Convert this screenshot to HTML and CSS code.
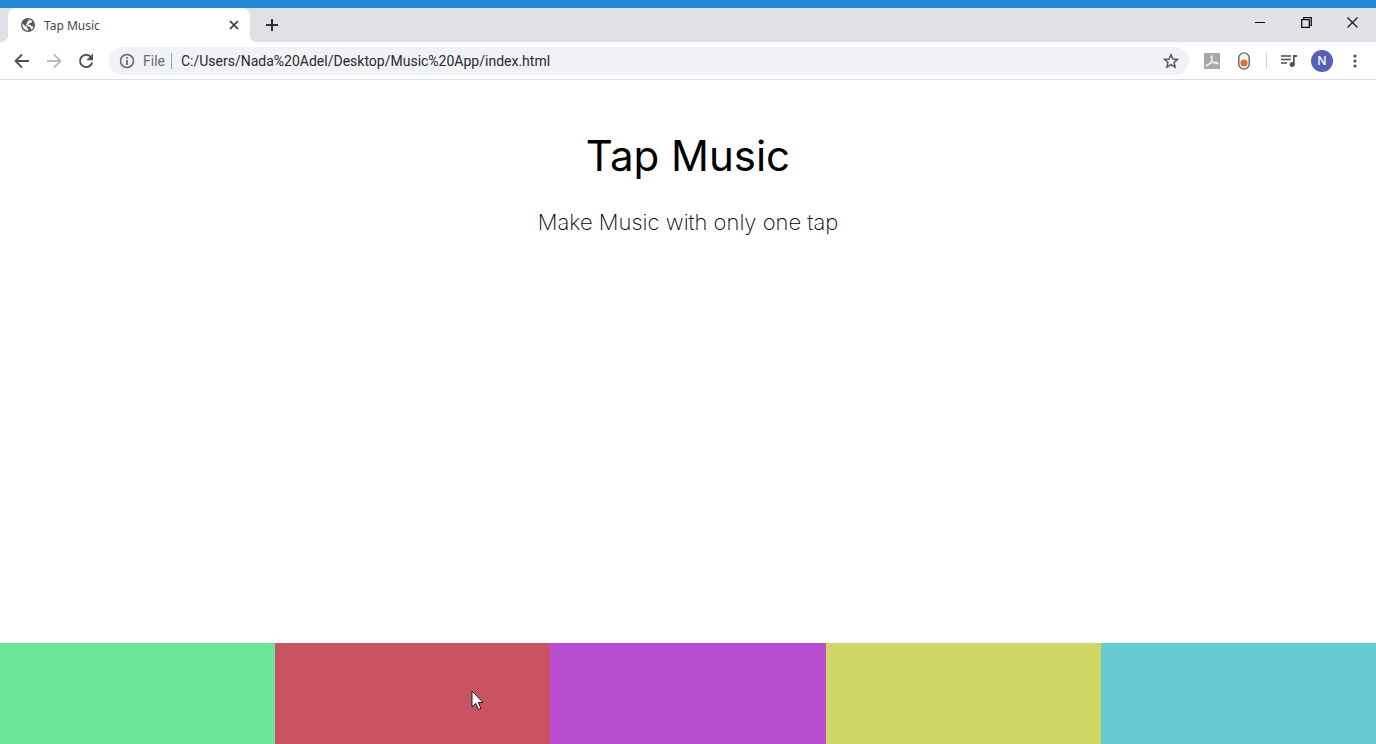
FILE: index.html
```html
<!DOCTYPE html>
<html lang="en">
<head>
<meta charset="utf-8">
<title>Tap Music</title>
<link rel="stylesheet" href="styles.css">
</head>
<body>
<div class="accent-strip"></div>
<div class="tab-bar">
  <div class="tab">
    <svg class="favicon" viewBox="0 0 24 24"><circle cx="12" cy="12" r="12" fill="#55585d"/><path d="M2.500 9.500l5 4.500h2.500v2.500l2.500 2V22C6 21.500 1.500 16 2.500 9.500zM13 2.500c3 .2 5 1.500 6.500 3.500L17 8.500h-3v2l-2.500 1.500h5l2 2.500h3c-.5 2-1.500 4-3 5.500l-1.500-1-1-3.500-5-1.500L8.500 11 11 8V5.500h2z" fill="#fff"/></svg>
    <span class="tab-title">Tap Music</span>
    <button class="icon-button tab-close" aria-label="Close tab"><svg width="10" height="10" viewBox="0 0 10 10"><path d="M1 1l8 8M9 1L1 9" stroke="#303236" stroke-width="1.700"/></svg></button>
  </div>
  <button class="icon-button new-tab" aria-label="New tab"><svg width="12" height="12" viewBox="0 0 12 12"><path d="M6 0v12M0 6h12" stroke="#303236" stroke-width="2"/></svg></button>
  <div class="window-controls">
    <button class="icon-button window-button" aria-label="Minimize"><svg width="10" height="10" viewBox="0 0 10 10"><path d="M0 5.500h10" stroke="#111"/></svg></button>
    <button class="icon-button window-button" aria-label="Restore"><svg width="11" height="11" viewBox="0 0 11 11" fill="none" stroke="#111" stroke-width="1.300"><path d="M.7 2.700h7.600v7.600H.7zM2.700 2.700v-2h7.600v7.600h-2"/></svg></button>
    <button class="icon-button window-button" aria-label="Close"><svg width="11" height="11" viewBox="0 0 11 11"><path d="M.5.500l10 10M10.500.500l-10 10" stroke="#111" stroke-width="1.100"/></svg></button>
  </div>
</div>
<div class="toolbar">
  <div class="navigation">
    <button class="icon-button" aria-label="Back"><svg width="16" height="16" viewBox="0 0 16 16" fill="none" stroke="#4d5055" stroke-width="1.800"><path d="M15 8H2M8 1.500L1.500 8 8 14.500"/></svg></button>
    <button class="icon-button" aria-label="Forward"><svg width="16" height="16" viewBox="0 0 16 16" fill="none" stroke="#b8babd" stroke-width="1.800"><path d="M1 8h13M8 1.500L14.500 8 8 14.500"/></svg></button>
    <button class="icon-button" aria-label="Reload"><svg width="16" height="16" viewBox="0 0 16 16"><path d="M13 4a6.200 6.200 0 1 0 1.200 5.500" fill="none" stroke="#4d5055" stroke-width="1.900"/><path d="M15 .5v6.700H8.300z" fill="#4d5055"/></svg></button>
  </div>
  <div class="address">
    <svg width="16" height="16" viewBox="0 0 16 16"><circle cx="8" cy="8" r="6.500" fill="none" stroke="#5f6368" stroke-width="1.500"/><path d="M8 7v5M8 4v1.700" stroke="#5f6368" stroke-width="1.700"/></svg>
    <label class="scheme" for="url">File</label>
    <span class="address-divider"></span>
    <input class="url" id="url" type="text" spellcheck="false" value="C:/Users/Nada%20Adel/Desktop/Music%20App/index.html">
    <button class="icon-button" aria-label="Bookmark this page"><svg width="16" height="16" viewBox="0 0 16 16"><path d="M8 1.700l1.900 4.300 4.700.4L11 9.500l1.100 4.600L8 11.600l-4.100 2.500L5 9.500 1.400 6.400l4.700-.4z" fill="none" stroke="#4d5055" stroke-width="1.400"/></svg></button>
  </div>
  <div class="extensions">
    <button class="icon-button" aria-label="PDF tools"><svg width="16" height="16" viewBox="0 0 16 16"><path d="M0 0h16v16H0z" fill="#a8a8a8"/><path d="M2.500 13c3-1 6-5 5.600-9.500-.2-1.500-1.500-1-1 .8.700 3 3.400 6 6.200 6.500 1 0 .7-1.500-1-1.500-3.500 0-7 1-9.200 2.500-.8.600-1 1.200-.6 1.200z" fill="none" stroke="#f3f3f3" stroke-width="1.200"/></svg></button>
    <button class="icon-button" aria-label="Recorder"><svg width="16" height="18" viewBox="0 0 16 18"><rect x="2.700" y=".9" width="10.600" height="16.200" rx="5.300" fill="#f6f3f0" stroke="#65676a" stroke-width="1.400"/><circle cx="8" cy="11" r="3.500" fill="#e16d39"/></svg></button>
  </div>
  <span class="toolbar-divider"></span>
  <div class="profile-tools">
    <button class="icon-button" aria-label="Media controls"><svg width="16" height="14" viewBox="0 0 16 14"><path d="M0 2h10M0 5.500h10M0 9h6" stroke="#4d5055" stroke-width="1.700"/><path d="M12 1h4v2h-2.300v7.500H12z" fill="#4d5055"/><circle cx="11.200" cy="10.500" r="2.500" fill="#4d5055"/></svg></button>
    <button class="icon-button avatar" aria-label="Profile N">N</button>
    <button class="icon-button" aria-label="Menu"><svg width="16" height="16" viewBox="0 0 16 16" fill="#4d5055"><circle cx="8" cy="3" r="1.600"/><circle cx="8" cy="8" r="1.600"/><circle cx="8" cy="13" r="1.600"/></svg></button>
  </div>
</div>
<main class="app">
  <header class="intro">
    <h1 class="title">Tap Music</h1>
    <p class="tagline">Make Music with only one tap</p>
  </header>
  <div class="pads">
    <button class="pad pad-green" aria-label="Pad 1"></button>
    <button class="pad pad-red" aria-label="Pad 2"></button>
    <button class="pad pad-purple" aria-label="Pad 3"></button>
    <button class="pad pad-yellow" aria-label="Pad 4"></button>
    <button class="pad pad-blue" aria-label="Pad 5"></button>
  </div>
</main>
<svg class="cursor" width="13" height="21" viewBox="0 0 13 21"><path d="M1 1v16l3.700-3.500L7.500 19.500l2.500-1.100-2.700-5.900H12z" fill="#fff" stroke="#1c1c1c"/></svg>
</body>
</html>
```
FILE: styles.css
```css
* { box-sizing: border-box; }
body {
  margin: 0;
  min-height: 100vh;
  display: flex;
  flex-direction: column;
  background: #fff;
  font-family: "Noto Sans", sans-serif;
}
svg { display: block; flex: none; }
.icon-button {
  display: flex;
  align-items: center;
  justify-content: center;
  flex: none;
  border: 0;
  padding: 0;
  background: none;
}
.accent-strip { height: 8px; background: #2487d5; }
.tab-bar {
  display: flex;
  height: 34px;
  padding: 0 1px 0 8px;
  background:
    radial-gradient(circle at 0 0, #dfe1e6 8px, #fff 9px) 0 100% / 8px 8px no-repeat,
    radial-gradient(circle at 100% 0, #dfe1e6 8px, #fff 9px) 250px 100% / 8px 8px no-repeat,
    #dfe1e6;
}
.tab {
  display: flex;
  align-items: center;
  width: 242px;
  padding: 0 11px 0 13px;
  gap: 9px;
  background: #fff;
  border-radius: 8px 8px 0 0;
}
.favicon { width: 14px; height: 14px; }
.tab-title { flex: 1; font-size: 12px; color: #45484d; }
.tab-close { width: 10px; height: 16px; }
.new-tab { width: 28px; margin-left: 8px; }
.window-controls { display: flex; margin-left: auto; }
.window-button { width: 46px; height: 28px; }
.toolbar {
  display: flex;
  align-items: center;
  height: 38px;
  padding: 0 13px 0 14px;
  border-bottom: 1px solid #dadce0;
}
.navigation { display: flex; gap: 16px; }
.address {
  display: flex;
  align-items: center;
  flex: 1;
  min-width: 0;
  height: 28px;
  margin-left: 15px;
  padding: 0 10px;
  border-radius: 14px;
  background: #f1f2f5;
  font-family: "Roboto", sans-serif;
  font-size: 14px;
}
.scheme { margin-left: 8px; color: #6a6e73; }
.address-divider { width: 1px; height: 16px; margin: 0 9px 0 6px; background: #9a9da1; }
.url {
  flex: 1;
  min-width: 0;
  border: 0;
  padding: 0;
  background: none;
  color: #28292c;
  font: inherit;
}
.extensions { display: flex; align-items: center; gap: 16px; margin-left: 15px; }
.toolbar-divider { width: 1px; height: 16px; margin: 0 14px; background: #d0d2d5; }
.profile-tools { display: flex; align-items: center; gap: 14px; }
.avatar {
  width: 22px;
  height: 22px;
  border-radius: 50%;
  background: #575fb9;
  color: #fff;
  font: 500 12px "Noto Sans", sans-serif;
}
.app { display: flex; flex: 1; flex-direction: column; justify-content: space-between; }
.intro { padding-top: 48px; text-align: center; color: #000; font-family: "Inter", sans-serif; }
.title { margin: 0; font-size: 42px; line-height: 56px; font-weight: 400; }
.tagline { margin: 24px 0 0; font-size: 22px; line-height: 28px; font-weight: 200; }
.pads { display: flex; height: 101px; }
.pad { flex: 1; border: 0; padding: 0; }
.pad-green { background: #6be597; }
.pad-red { background: #ca5361; }
.pad-purple { background: #b94dd1; }
.pad-yellow { background: #d1d766; }
.pad-blue { background: #69cbd2; }
.cursor { position: absolute; left: 471px; top: 690px; }
```
